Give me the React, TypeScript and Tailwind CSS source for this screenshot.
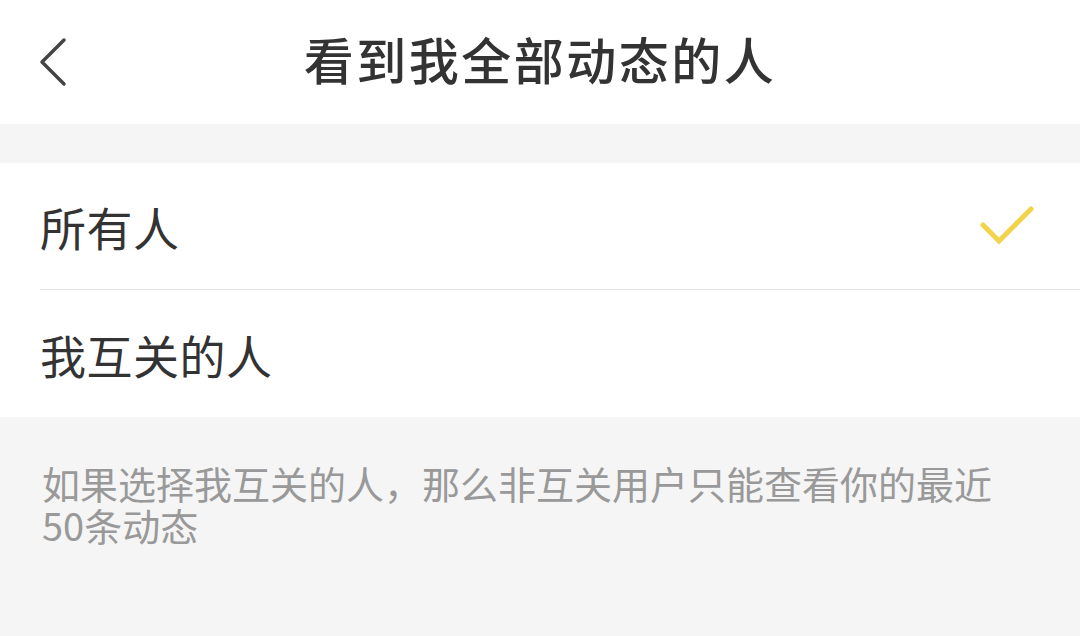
const font = { fontFamily: '"Noto Sans CJK SC", "Noto Sans", sans-serif' };

function Check() {
  return (
    <svg width="54" height="42" viewBox="0 0 54 42" fill="none">
      <path d="M3 20 L19 36 L51 4" stroke="#f3d34a" strokeWidth="5" strokeLinecap="round" strokeLinejoin="miter" />
    </svg>
  );
}

export default function App() {
  const options = [
    { label: '所有人', checked: true },
    { label: '我互关的人', checked: false },
  ];
  return (
    <div className="flex h-[636px] w-[1080px] flex-col bg-[#f5f5f5]" style={font}>
      <header className="relative flex h-[124px] items-center justify-center bg-white pb-[8px]">
        <button className="absolute left-[36px] top-[37px]">
          <svg width="34" height="50" viewBox="0 0 34 50" fill="none">
            <path d="M28 3 L6 25 L28 47" stroke="#444" strokeWidth="3.5" strokeLinecap="round" strokeLinejoin="round" />
          </svg>
        </button>
        <h1 className="text-[50px] font-medium leading-none tracking-[2.5px] text-[#333]">看到我全部动态的人</h1>
      </header>
      <div className="mt-[39px] bg-white pl-[40px]">
        {options.map((o, i) => (
          <div
            key={o.label}
            className={`flex h-[127px] items-center justify-between pr-[46px] ${i === 0 ? 'border-b border-[#e2e2e2]' : ''}`}
          >
            <span className="text-[46px] leading-none tracking-[0.5px] text-[#333]">{o.label}</span>
            {o.checked && <Check />}
          </div>
        ))}
      </div>
      <p className="mt-[45px] pl-[42px] pr-[60px] text-[38px] leading-[42px] text-[#999]">
        如果选择我互关的人，那么非互关用户只能查看你的最近50条动态
      </p>
    </div>
  );
}
